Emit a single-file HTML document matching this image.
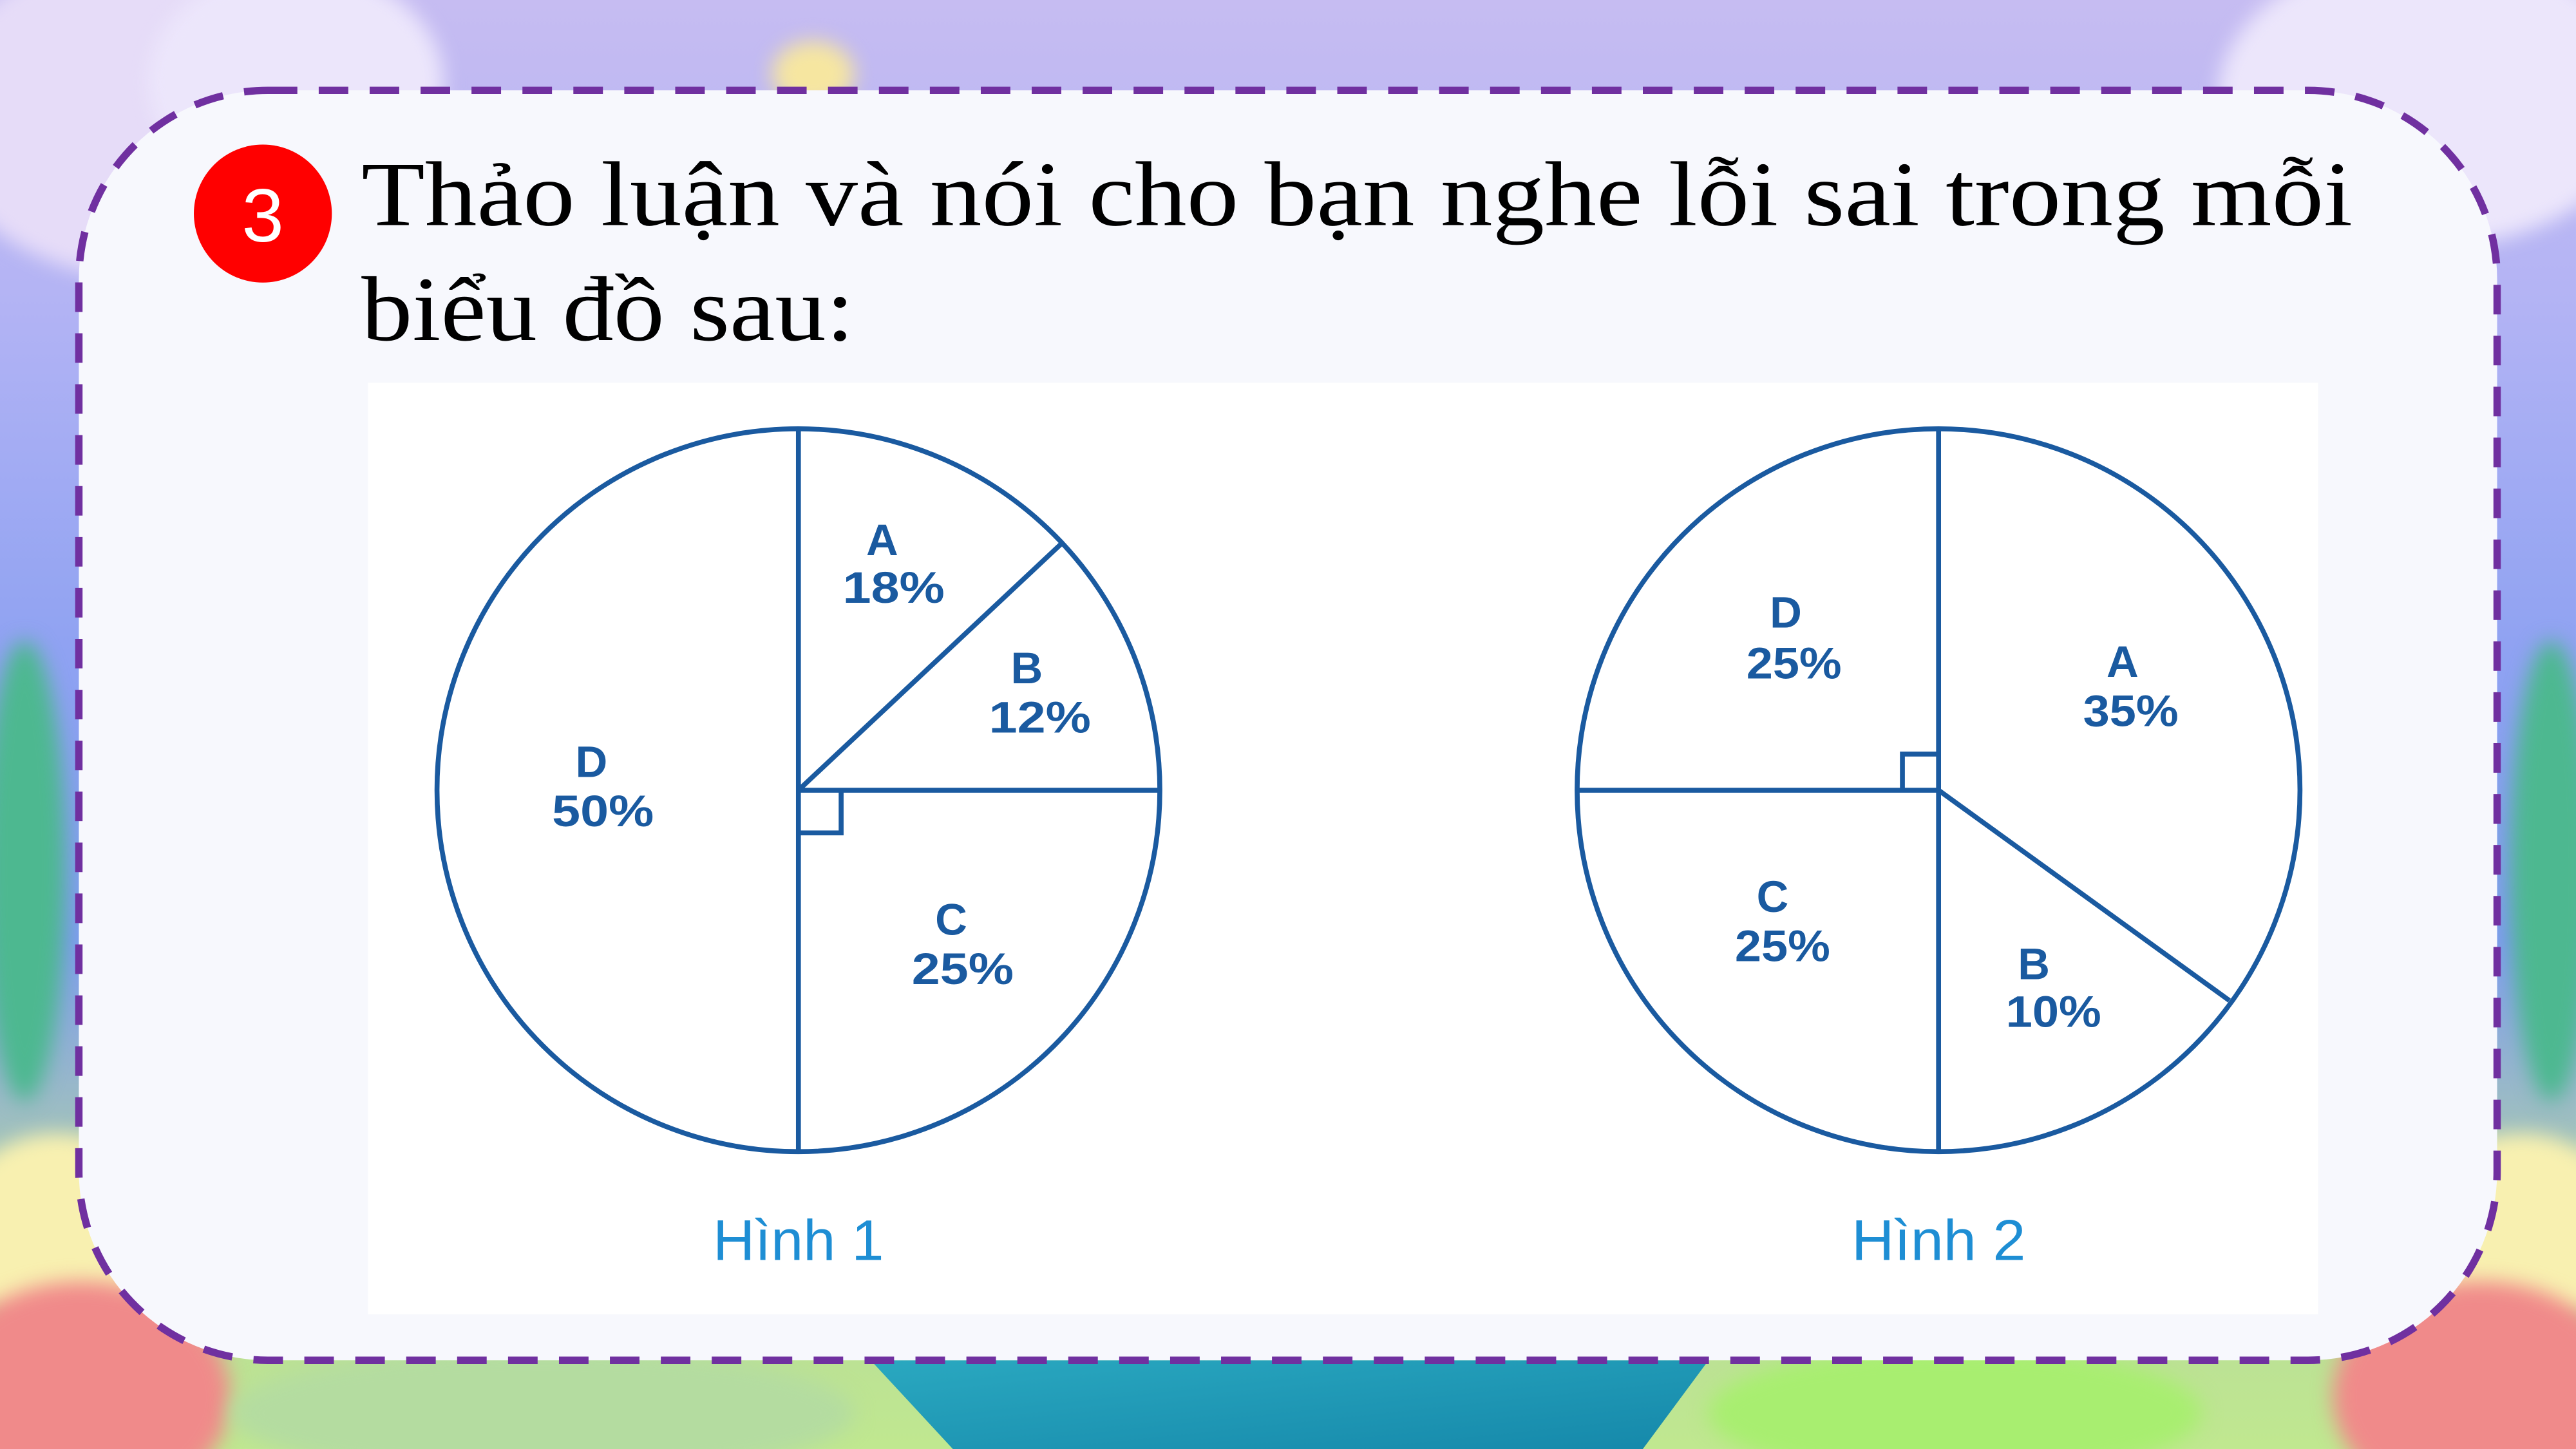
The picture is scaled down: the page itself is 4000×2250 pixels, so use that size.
<!DOCTYPE html>
<html><head><meta charset="utf-8"><style>
html,body{margin:0;padding:0;width:4000px;height:2250px;overflow:hidden}
#s{position:absolute;left:0;top:0;width:1568px;height:882px;transform:scale(2.5510);transform-origin:0 0;overflow:hidden;
background:linear-gradient(180deg,#c6bcf2 0%,#b4b4f4 20%,#8fa2f2 45%,#7f9cf0 65%,#b8dc98 88%,#c0e890 100%)}
.blob{position:absolute;border-radius:50%;filter:blur(6px)}
</style></head><body><div id="s">
<div class="blob" style="left:-40px;top:-30px;width:260px;height:200px;background:#e6dcf8"></div>
<div class="blob" style="left:90px;top:-20px;width:180px;height:140px;background:#ece6fb"></div>
<div class="blob" style="left:1350px;top:-30px;width:260px;height:180px;background:#ece6fb"></div>
<div class="blob" style="left:470px;top:25px;width:50px;height:40px;background:#f6e6a0"></div>
<div class="blob" style="left:-10px;top:390px;width:50px;height:280px;background:#4db890"></div>
<div class="blob" style="left:1528px;top:390px;width:50px;height:280px;background:#4db890"></div>
<div class="blob" style="left:-30px;top:690px;width:130px;height:120px;background:#f8f0b0"></div>
<div class="blob" style="left:-40px;top:780px;width:180px;height:140px;background:#f08a8a"></div>
<div class="blob" style="left:140px;top:820px;width:380px;height:80px;background:#b4dca0"></div>
<div class="blob" style="left:1040px;top:820px;width:300px;height:80px;background:#a8ee70"></div>
<div class="blob" style="left:1470px;top:690px;width:130px;height:120px;background:#f8f0b0"></div>
<div class="blob" style="left:1420px;top:780px;width:180px;height:140px;background:#f08a8a"></div>
<svg style="position:absolute;left:0;top:0" width="1568" height="882">
<defs><linearGradient id="t" x1="0" y1="0" x2="1" y2="1"><stop offset="0" stop-color="#2aa8c0"/><stop offset="1" stop-color="#1588aa"/></linearGradient></defs>
<polygon points="530,828 1040,828 1000,882 580,882" fill="url(#t)"/>
<rect x="48" y="55" width="1472" height="773" rx="115" fill="#f7f8fd" stroke="#7030a0" stroke-width="4.5" stroke-dasharray="18 13"/>
<rect x="224" y="233" width="1187" height="567" fill="#ffffff"/>
<circle cx="160" cy="130" r="42" fill="#ff0000"/>
<text x="160" y="147" text-anchor="middle" font-family="Liberation Sans,sans-serif" font-size="46" fill="#fff">3</text>
<g font-family="Liberation Serif,serif" font-size="56" fill="#000">
<text x="220" y="137" textLength="1212" lengthAdjust="spacingAndGlyphs">Thảo luận và nói cho bạn nghe lỗi sai trong mỗi</text>
<text x="220" y="207" textLength="300" lengthAdjust="spacingAndGlyphs">biểu đồ sau:</text></g>
<g fill="none" stroke="#1a5aa0" stroke-width="3">
<circle cx="486" cy="481" r="220"/>
<path d="M486 261V701M486 481H706M486 481L646 331M486 481v26h26v-26"/>
<circle cx="1180" cy="481" r="220"/>
<path d="M1180 261V701M1180 481H960M1180 481L1357 609M1180 481v-22h-22v22"/>
</g>
<g font-family="Liberation Sans,sans-serif" font-weight="bold" font-size="27" fill="#1a5aa0" text-anchor="middle">
<text x="537" y="338">A</text><text x="544" y="367" textLength="62" lengthAdjust="spacingAndGlyphs">18%</text>
<text x="625" y="416">B</text><text x="633" y="446" textLength="62" lengthAdjust="spacingAndGlyphs">12%</text>
<text x="579" y="569">C</text><text x="586" y="599" textLength="62" lengthAdjust="spacingAndGlyphs">25%</text>
<text x="360" y="473">D</text><text x="367" y="503" textLength="62" lengthAdjust="spacingAndGlyphs">50%</text>
<text x="1087" y="382">D</text><text x="1092" y="413" textLength="58" lengthAdjust="spacingAndGlyphs">25%</text>
<text x="1292" y="412">A</text><text x="1297" y="442" textLength="58" lengthAdjust="spacingAndGlyphs">35%</text>
<text x="1079" y="555">C</text><text x="1085" y="585" textLength="58" lengthAdjust="spacingAndGlyphs">25%</text>
<text x="1238" y="596">B</text><text x="1250" y="625" textLength="58" lengthAdjust="spacingAndGlyphs">10%</text>
</g>
<g font-family="Liberation Sans,sans-serif" font-size="35" fill="#1e8ed4" text-anchor="middle">
<text x="486" y="767" textLength="104" lengthAdjust="spacingAndGlyphs">Hình 1</text><text x="1180" y="767" textLength="106" lengthAdjust="spacingAndGlyphs">Hình 2</text></g>
</svg>
</div></body></html>
